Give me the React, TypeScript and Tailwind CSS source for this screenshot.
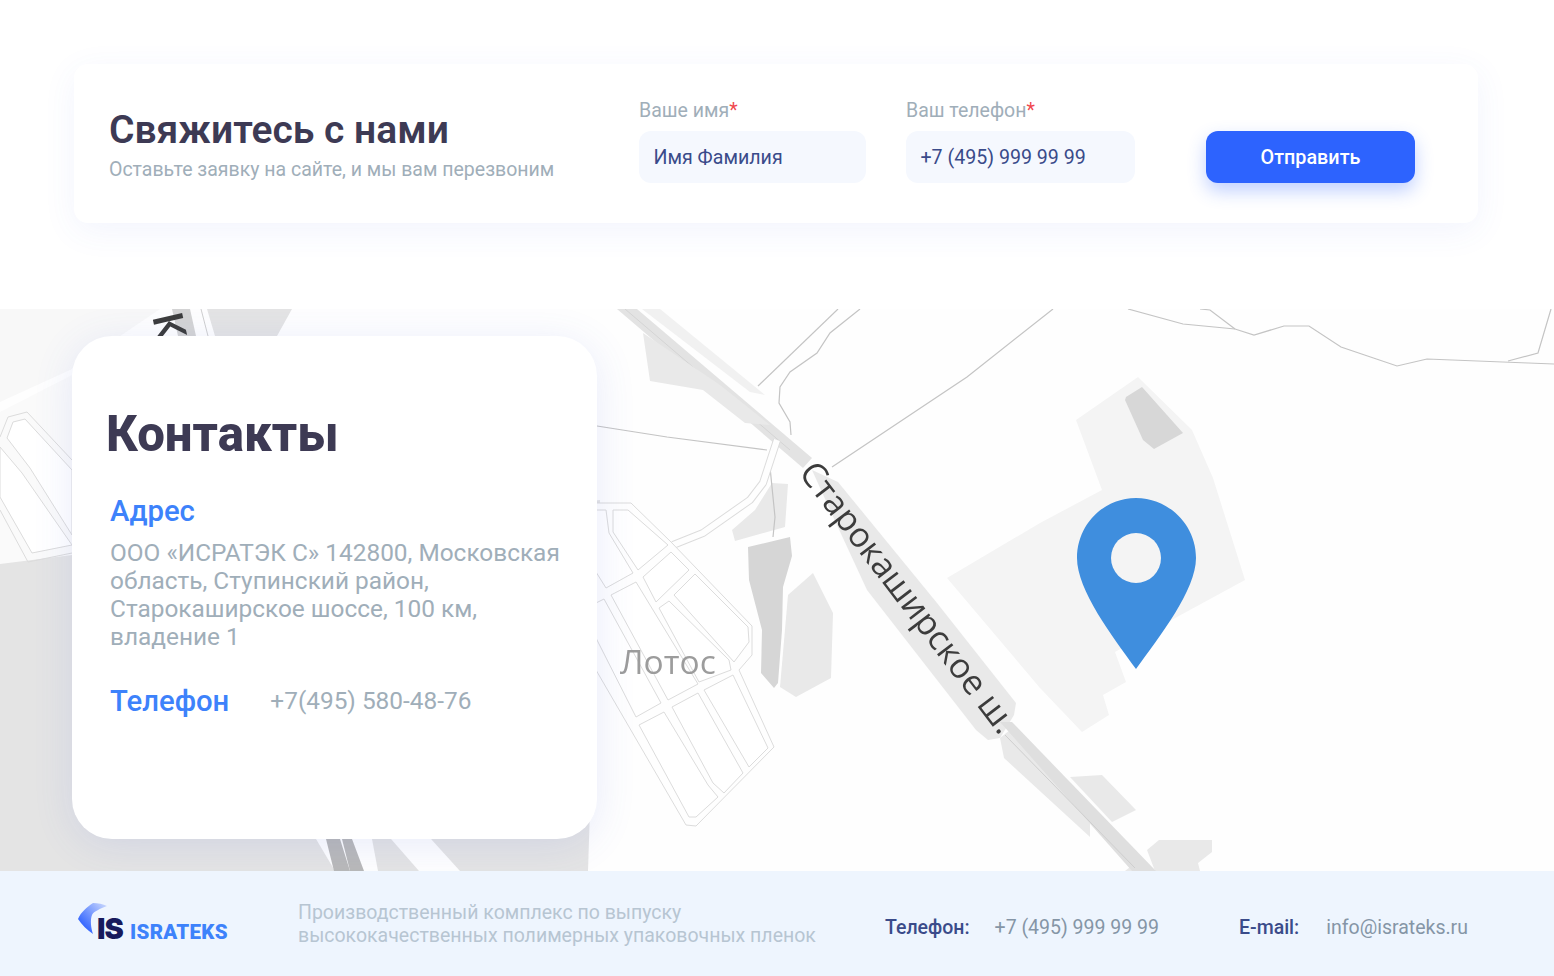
const cells = [
  "613,510 628,510 668,545 638,570 613,532",
  "596,510 606,510 609,533 633,573 606,588 596,572",
  "671,552 689,570 656,602 643,577",
  "695,574 748,627 749,642 734,662 674,595",
  "659,608 669,601 729,660 731,670 699,682",
  "611,595 636,582 698,684 668,700",
  "596,603 604,599 661,703 636,717 596,638",
  "639,725 664,712 708,785 718,797 696,817 689,817",
  "672,707 698,693 743,773 724,793 713,783",
  "704,690 733,675 768,748 749,767",
  "7,438 13,422 25,419 72,470 72,535 30,468",
  "0,447 22,473 72,545 32,553 0,497",
];

const patches = [
  "643,333 650,381 703,390 745,423 770,425 720,385",
  "772,483 788,484 785,527 735,541 732,530 755,510",
  "788,595 813,573 833,613 831,678 796,697 780,687",
  "812,470 838,482 937,603 1016,703 1014,715 1000,738 988,740 976,730 867,590 830,510",
  "1000,738 1004,758 1090,837 1090,820 1010,730",
  "1070,777 1102,775 1136,810 1112,822",
  "1147,850 1159,840 1212,840 1212,852 1198,863 1200,871 1155,871",
  "1125,871 1135,863 1145,871",
];

function MapDrawing() {
  return (
    <svg viewBox="0 309 1554 562" className="absolute inset-0 w-full h-full blur-[0.5px]">
      <rect x="0" y="309" width="1554" height="562" fill="#fefefe" />
      {/* left side */}
      <polygon points="0,309 160,309 70,370 0,402" fill="#f8f8f8" />
      <polygon points="0,412 72,375 72,600 0,600" fill="#fafafa" />
      <polygon points="0,564 72,555 600,500 588,871 0,871" fill="#e4e4e4" />
      <polygon points="207,309 292,309 277,336 215,336" fill="#e4e4e4" />
      <polygon points="172,309 190,309 196,336 178,336" fill="#d4d4d4" />
      <line x1="201" y1="309" x2="208" y2="336" stroke="#cfcfcf" strokeWidth="1" />
      <text x="152" y="316" fontFamily="Open Sans, sans-serif" fontWeight="600" fontSize="42" fill="#3c3c3c" transform="rotate(77 152 316)">К</text>
      <polygon points="316,839 372,839 378,871 335,871" fill="#fefefe" />
      <polygon points="391,839 431,839 460,871 419,871" fill="#fefefe" />
      <polygon points="326,839 340,839 350,871 334,871" fill="#b9b9b9" />
      <polygon points="342,839 352,839 364,871 350,871" fill="#b9b9b9" />

      {/* main road */}
      <polygon points="642,309 660,309 765,395 750,392" fill="#f1f1f1" />
      <polygon points="617,309 637,309 812,458 803,468" fill="#e3e3e3" />
      <line x1="625" y1="309" x2="790" y2="450" stroke="#d4d4d4" strokeWidth="1" />
      {patches.map((p) => (
        <polygon key={p} points={p} fill="#e9e9e9" />
      ))}
      <polygon points="1000,722 1012,722 1156,871 1132,871" fill="#dfdfdf" />
      <line x1="1005" y1="735" x2="1135" y2="868" stroke="#cecece" strokeWidth="1" />

      {/* water */}
      <polygon points="748,547 790,537 792,556 783,587 782,630 778,683 774,688 761,673 762,630 749,580" fill="#d6d6d6" />

      {/* factory */}
      <polygon
        points="1138,377 1192,430 1213,478 1245,580 1177,617 1115,652 1126,682 1103,695 1109,715 1082,732 1040,688 947,578 1040,523 1102,490 1076,420"
        fill="#f4f4f4"
      />
      <polygon points="1142,387 1183,433 1154,449 1143,440 1125,400 1126,397" fill="#d7d7d7" />

      {/* thin lines */}
      <g fill="none" stroke="#c4c4c4" strokeWidth="1.2">
        <polyline points="838,309 758,386" />
        <polyline points="860,309 830,333 817,353 790,372 780,387 779,403 790,422 791,435" />
        <polyline points="1053,309 967,377 832,467" />
        <polyline points="597,426 667,437 767,450" />
        <polyline points="770,467 775,517 773,537" />
        <polyline points="1128,309 1183,324 1235,329 1254,335 1284,326 1309,326 1341,347 1397,366 1427,359 1554,364" />
        <polyline points="1200,309 1210,310 1235,329" />
        <polyline points="1551,309 1538,353 1508,361" />
      </g>

      {/* Lotos streets */}
      <g fill="none" strokeLinejoin="round">
        <polyline points="777,440 763,483 750,500 703,533 673,545" stroke="#dcdcdc" strokeWidth="8" />
        <polyline points="777,440 763,483 750,500 703,533 673,545" stroke="#fefefe" strokeWidth="6" />
      </g>
      <polyline
        points="596,503 631,503 671,542 752,626 752,655 739,670 774,747 696,826 686,825 596,670"
        fill="#fefefe"
        stroke="#dcdcdc"
        strokeWidth="1"
      />
      <polyline points="0,437 8,417 27,412 72,460" fill="none" stroke="#dcdcdc" strokeWidth="1" />
      <polyline points="0,510 28,562 72,553" fill="none" stroke="#dcdcdc" strokeWidth="1" />
      {cells.map((c) => (
        <polygon key={c} points={c} fill="#ffffff" stroke="#dcdcdc" strokeWidth="1" strokeLinejoin="round" />
      ))}

      <text x="620" y="674" fontFamily="Open Sans, sans-serif" fontSize="33.5" fill="#9c9c9c">Лотос</text>
      <text x="798" y="473" fontFamily="Open Sans, sans-serif" fontSize="34.4" fill="#3c3c3c" transform="rotate(52.5 798 473)">
        Старокаширское ш.
      </text>

      {/* pin */}
      <path
        d="M1136 498C1169 498 1196 525 1196 558C1196 590 1160 636 1136 669C1112 636 1077 590 1077 558C1077 525 1103 498 1136 498Z"
        fill="#3f8ede"
      />
      <circle cx="1136" cy="558" r="25" fill="#f4f4f4" />
    </svg>
  );
}

function Field({ label, value, width }: { label: string; value: string; width: string }) {
  return (
    <div className={`flex flex-col ${width}`}>
      <label className="text-[19.5px] leading-[22px] text-[#a0aeb9] mb-[9px]">
        {label}
        <span className="text-[#f0484f]">*</span>
      </label>
      <div className="h-[52px] rounded-[12px] bg-[#f5f8fe] pl-[14.5px] pt-[2px] flex items-center text-[19.6px] text-[#3a4b8a]">
        {value}
      </div>
    </div>
  );
}

function Logo() {
  return (
    <div className="relative w-[150px] h-[40px] shrink-0">
      <svg viewBox="0 0 32 36" className="absolute left-0 -top-[4px] w-[32px] h-[36px]">
        <defs>
          <linearGradient id="swoosh" x1="0" y1="1" x2="1" y2="0">
            <stop offset="0.2" stopColor="#3264ff" />
            <stop offset="1" stopColor="#cfdcfd" />
          </linearGradient>
        </defs>
        <path d="M0 19C3 12 9 7 15 3C20 3 25 4 29 6C22 9 16 11 14 15C12 20 13 28 15 34C9 30 4 25 0 19Z" fill="url(#swoosh)" />
      </svg>
      <span className="absolute left-[19px] top-[10px] text-[29px] leading-[30px] font-black text-[#171a5c] font-['Inter',sans-serif] tracking-[-1px]">
        IS
      </span>
      <span className="absolute left-[52px] top-[16px] text-[20.5px] leading-[24px] font-black text-[#3d82fb] font-['Roboto',sans-serif] tracking-[0.3px]">
        ISRATEKS
      </span>
    </div>
  );
}

export default function App() {
  return (
    <div className="w-[1554px] h-[976px] overflow-hidden bg-white font-['Roboto',sans-serif]">
      {/* Contact form */}
      <div className="pl-[74px] pr-[76px] pt-[64px] pb-[86px]">
        <div className="h-[159px] rounded-[14px] bg-white shadow-[0_8px_34px_rgba(70,100,230,0.07)] flex items-center pl-[35px]">
          <div className="w-[530px] shrink-0 pt-[3px]">
            <h2 className="text-[39px] leading-[44px] font-semibold text-[#3d3a54]">Свяжитесь с нами</h2>
            <p className="text-[19.5px] leading-[24px] mt-[6px] text-[#a0aeb9]">
              Оставьте заявку на сайте, и мы вам перезвоним
            </p>
          </div>
          <div className="flex gap-[40px] -mt-[5px]">
            <Field label="Ваше имя" value="Имя Фамилия" width="w-[227px]" />
            <Field label="Ваш телефон" value="+7 (495) 999 99 99" width="w-[229px]" />
          </div>
          <button className="ml-[71px] mt-[27px] pt-[2px] w-[209px] h-[52px] rounded-[12px] bg-[#2d63fe] text-white text-[19.8px] font-medium shadow-[0_8px_18px_rgba(45,99,254,0.3)]">
            Отправить
          </button>
        </div>
      </div>

      {/* Map and contacts */}
      <div className="relative h-[562px] pl-[72px] pt-[27px] overflow-hidden">
        <MapDrawing />
        <div className="relative w-[525px] h-[503px] rounded-[40px] bg-white shadow-[0_6px_40px_rgba(70,100,220,0.12)] pt-[66px] px-[34px]">
          <h1 className="text-[49.2px] leading-[64px] font-extrabold text-[#3d3a54]">Контакты</h1>
          <div className="pl-[4px] mt-[27px]">
            <h3 className="text-[29.3px] leading-[36px] font-medium text-[#3d82fb]">Адрес</h3>
            <p className="text-[24.4px] leading-[28px] mt-[10px] text-[#a0aeb9] whitespace-nowrap">
              ООО «ИСРАТЭК С» 142800, Московская
              <br />
              область, Ступинский район,
              <br />
              Старокаширское шоссе, 100 км,
              <br />
              владение 1
            </p>
            <div className="flex items-center gap-[41px] mt-[32px]">
              <h3 className="text-[29.3px] leading-[36px] font-medium text-[#3d82fb]">Телефон</h3>
              <span className="text-[24.4px] text-[#a0aeb9]">+7(495) 580-48-76</span>
            </div>
          </div>
        </div>
      </div>

      {/* Footer */}
      <footer className="h-[105px] bg-[#eef5fe] flex items-center pl-[78px] text-[19.5px]">
        <Logo />
        <p className="ml-[70px] w-[540px] shrink-0 leading-[23px] text-[#b7c5d2]">
          Производственный комплекс по выпуску
          <br />
          высококачественных полимерных упаковочных пленок
        </p>
        <div className="ml-[47px] mt-[8px] flex gap-[25px] w-[354px] shrink-0">
          <span className="font-medium text-[#3a4b8a]">Телефон:</span>
          <span className="text-[#8595a6]">+7 (495) 999 99 99</span>
        </div>
        <div className="mt-[8px] flex gap-[27px]">
          <span className="font-medium text-[#3a4b8a]">E-mail:</span>
          <span className="text-[#8595a6]">info@israteks.ru</span>
        </div>
      </footer>
    </div>
  );
}
